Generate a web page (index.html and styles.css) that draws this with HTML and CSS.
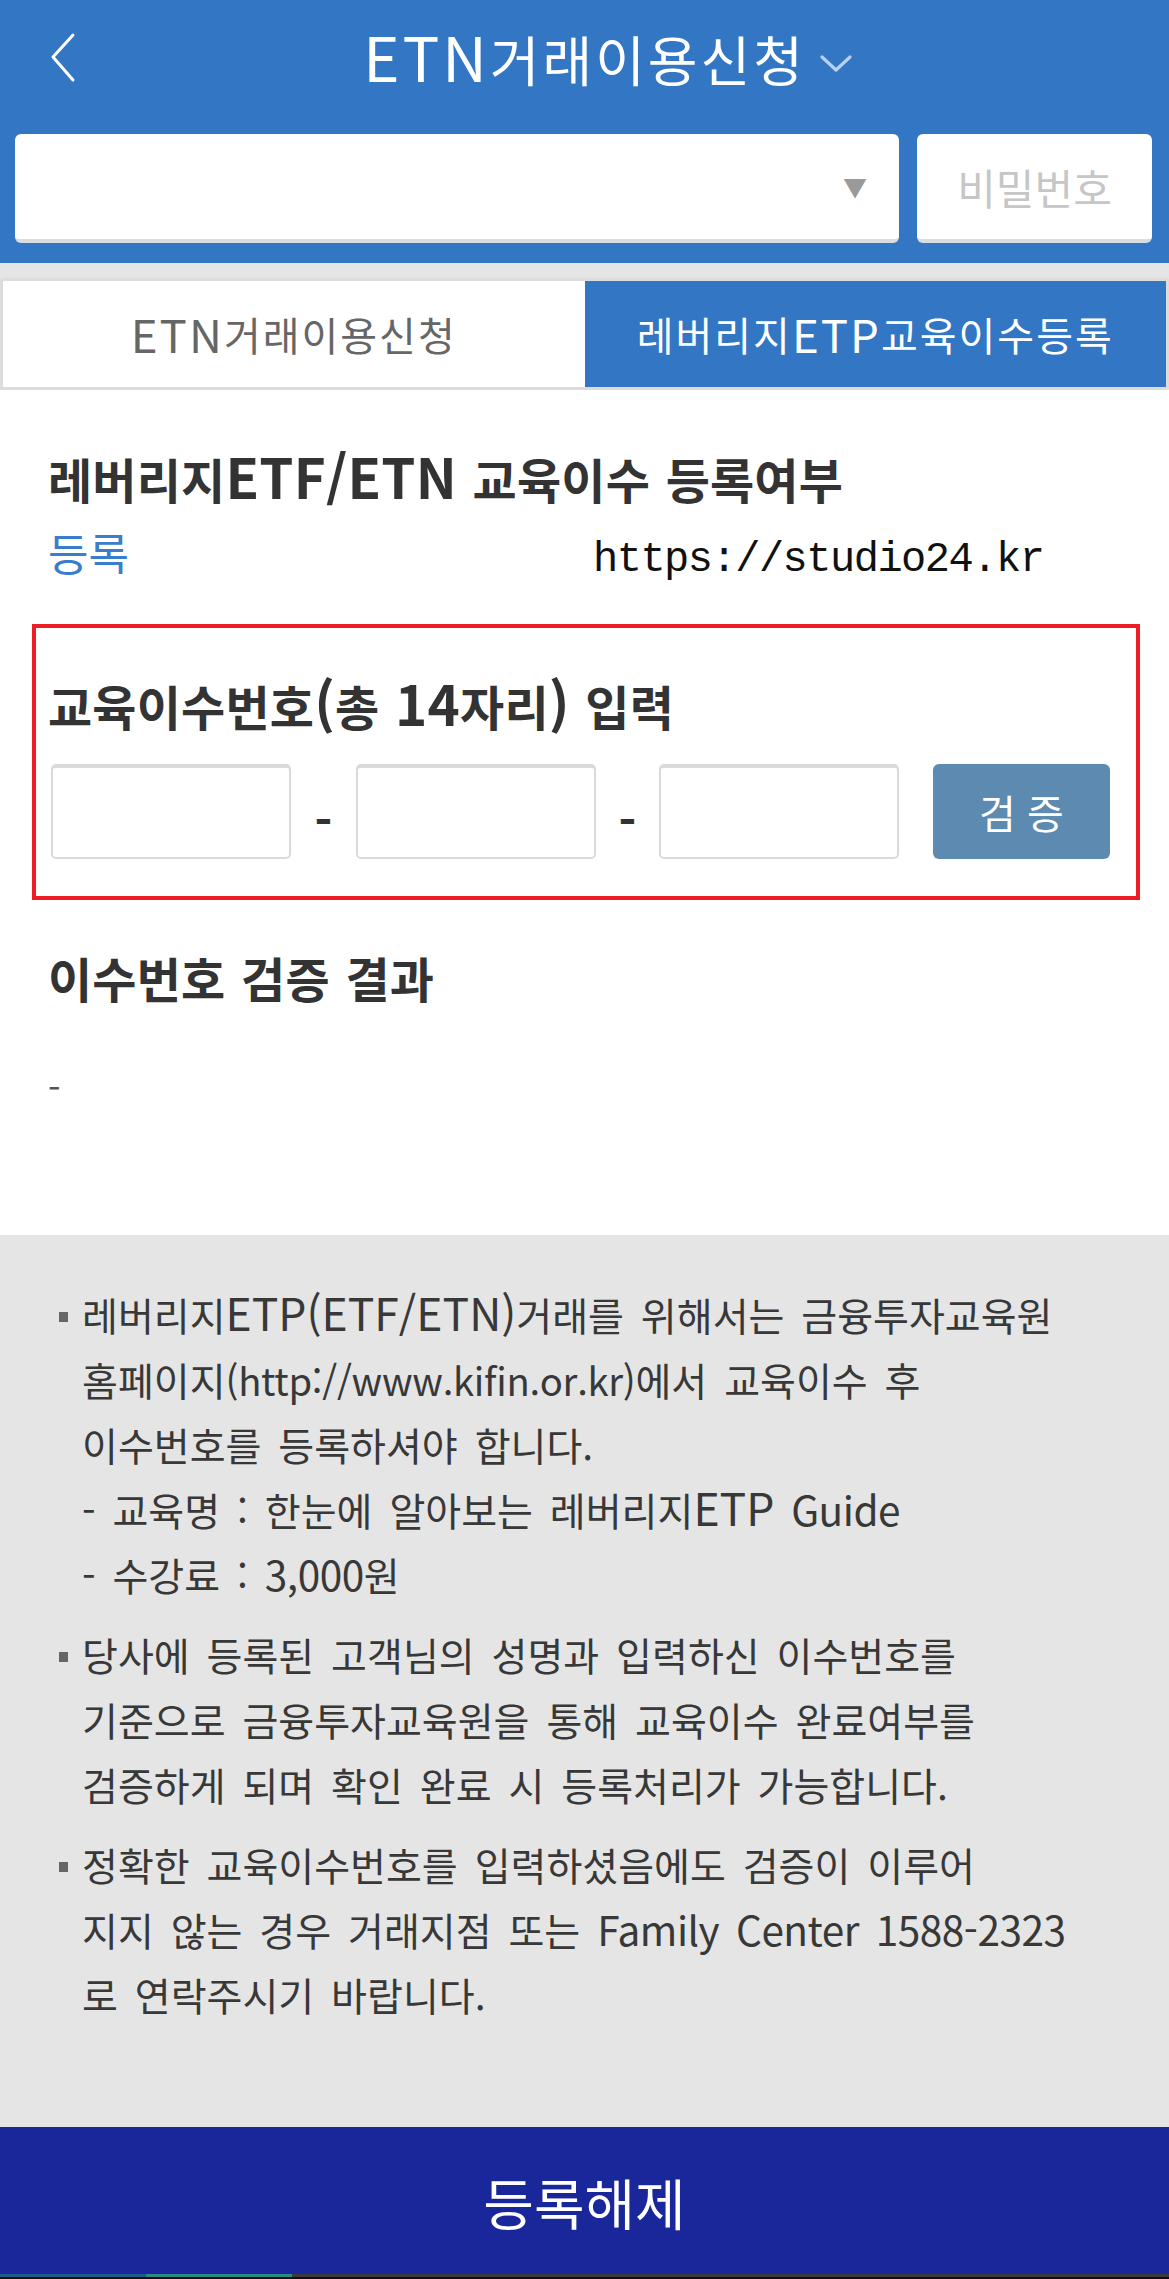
FILE: index.html
```html
<!DOCTYPE html>
<html lang="ko">
<head>
<meta charset="utf-8">
<title>ETN거래이용신청</title>
<link rel="stylesheet" href="styles.css">
</head>
<body>
<header class="header">
  <div class="topbar">
    <span class="back">
      <svg width="30" height="52" viewBox="0 0 30 52"><polyline points="23,3 3,25 23,48" fill="none" stroke="#fff" stroke-width="3" stroke-linecap="round" stroke-linejoin="round"/></svg>
    </span>
    <h1 class="title"><span class="en">ETN</span>거래이용신청<span class="chev"><svg width="32" height="18" viewBox="0 0 32 18"><polyline points="2,2 16,15 30,2" fill="none" stroke="#b9d1ee" stroke-width="3.2" stroke-linecap="round" stroke-linejoin="round"/></svg></span></h1>
  </div>
  <div class="selrow">
    <div class="select"><span class="tri">&#9660;</span></div>
    <div class="pwd">비밀번호</div>
  </div>
</header>
<div class="tabwrap">
  <div class="tabs">
    <div class="tab"><span class="en">ETN</span>거래이용신청</div>
    <div class="tab active">레버리지<span class="en">ETP</span>교육이수등록</div>
  </div>
</div>
<main class="content">
  <h2 class="h">레버리지<span class="en">ETF/ETN</span> 교육이수 등록여부</h2>
  <div class="status"><span class="reg">등록</span><span class="url">https://studio24.kr</span></div>
  <section class="box">
    <h2 class="h">교육이수번호<span class="en">(</span>총 <span class="en">14</span>자리<span class="en">)</span> 입력</h2>
    <div class="inrow">
      <div class="inp"></div>
      <span class="dash">-</span>
      <div class="inp"></div>
      <span class="dash">-</span>
      <div class="inp"></div>
      <button class="verify">검 증</button>
    </div>
  </section>
  <h2 class="h h3">이수번호 검증 결과</h2>
  <div class="result">-</div>
</main>
<section class="notice">
  <ul>
    <li><span class="sq"></span><p>레버리지<span class="en">ETP(ETF/ETN)</span>거래를 위해서는 금융투자교육원<br>홈페이지<span class="lc">(http://www.kifin.or.kr)</span>에서 교육이수 후<br>이수번호를 등록하셔야 합니다.<br>- 교육명 : 한눈에 알아보는 레버리지<span class="en">ETP</span><span class="num"> Guide</span><br>- 수강료 : <span class="num">3,000</span>원</p></li>
    <li><span class="sq"></span><p>당사에 등록된 고객님의 성명과 입력하신 이수번호를<br>기준으로 금융투자교육원을 통해 교육이수 완료여부를<br>검증하게 되며 확인 완료 시 등록처리가 가능합니다.</p></li>
    <li><span class="sq"></span><p>정확한 교육이수번호를 입력하셨음에도 검증이 이루어<br>지지 않는 경우 거래지점 또는 <span class="num">Family Center 1588-2323</span><br>로 연락주시기 바랍니다.</p></li>
  </ul>
</section>
<footer class="bottom">
  <div class="unreg">등록해제</div>
  <div class="strip"><span class="s1"></span><span class="s2"></span><span class="s3"></span></div>
</footer>
</body>
</html>
```
FILE: styles.css
```css
* { box-sizing: border-box; }
html, body { margin: 0; padding: 0; }
body {
  width: 1169px;
  font-family: "Noto Sans CJK KR", "Noto Sans", sans-serif;
  background: #fff;
  color: #333;
}
.en { font-size: 1.14em; line-height: 1; }
.lc { font-size: 0.98em; line-height: 1; letter-spacing: -0.3px; }
.num { font-size: 1.04em; line-height: 1; letter-spacing: -0.5px; }
.header { background: #3377c4; padding-bottom: 20px; }
.topbar {
  height: 116px;
  display: grid;
  grid-template-columns: 1fr auto 1fr;
  align-items: center;
}
.back { padding-left: 50px; display: flex; align-items: center; }
.title {
  margin: 0;
  font-size: 54px;
  font-weight: 400;
  color: #fff;
  line-height: 64px;
  position: relative;
  letter-spacing: 3px;
}
.chev { position: absolute; left: calc(100% + 14px); top: 50%; margin-top: -8px; display: block; line-height: 0; }
.selrow { display: flex; gap: 18px; padding: 18px 17px 0 15px; height: 127px; }
.select {
  flex: 0 0 884px;
  height: 109px;
  background: #fff;
  border-radius: 6px;
  border-bottom: 4px solid #d9dde2;
  display: flex;
  justify-content: flex-end;
  align-items: center;
  padding-right: 32px;
}
.tri { color: #9a9a9a; font-size: 24px; line-height: 1; }
.pwd {
  flex: 1;
  height: 109px;
  background: #fff;
  border-radius: 6px;
  border-bottom: 4px solid #d9dde2;
  display: flex;
  align-items: center;
  justify-content: center;
  color: #c6c6c6;
  font-size: 42px;
}
.tabwrap { background: #e5e5e5; padding-top: 15px; }
.tabs {
  display: flex;
  border: 3px solid #dcdcdc;
  border-radius: 3px;
  height: 112px;
  background: #fff;
}
.tab {
  flex: 1;
  display: flex;
  align-items: center;
  justify-content: center;
  font-size: 40px;
  line-height: 50px;
  color: #666;
  letter-spacing: 2px;
}
.tab.active { background: #3377c4; color: #fff; }
.content { padding: 59px 28px 0 48px; height: 845px; }
.h {
  margin: 0;
  font-size: 48px;
  font-weight: 700;
  line-height: 54px;
  color: #333;
  letter-spacing: 0.2px;
  word-spacing: 2px;
}
.status { display: flex; align-items: baseline; margin-top: 22px; height: 50px; }
.reg { color: #3a7dcb; font-size: 44px; line-height: 50px; }
.url {
  font-family: "Liberation Mono", monospace;
  font-size: 42px;
  letter-spacing: -1.5px;
  color: #111;
  margin-left: 464px;
}
.box {
  margin: 47px 0 0 -16px;
  width: 1108px;
  height: 276px;
  border: 4px solid #ee1c25;
  padding: 48px 14px 0 12px;
}
.inrow { display: flex; align-items: center; margin-top: 32px; padding-left: 3px; }
.inp {
  width: 240px;
  height: 95px;
  border: 2px solid #dadada;
  border-top-width: 4px;
  border-radius: 5px;
  background: #fff;
}
.dash {
  width: 65px;
  text-align: center;
  font-size: 48px;
  font-weight: 700;
  line-height: 48px;
  color: #333;
  padding-top: 14px;
}
.dash:nth-of-type(2) { width: 63px; }
.verify {
  margin-left: 34px;
  width: 177px;
  height: 95px;
  border: 0;
  border-radius: 6px;
  background: #5c8ab0;
  color: #fff;
  font-family: inherit;
  font-size: 40px;
  padding: 0;
}
.h3 { margin-top: 50px; }
.result { margin-top: 62px; color: #555; font-size: 36px; line-height: 40px; }
.notice { background: #e5e5e5; padding: 47px 30px 97px 59px; height: 892px; }
.notice ul { list-style: none; margin: 0; padding: 0; }
.notice li { display: flex; align-items: flex-start; }
.notice li + li { margin-top: 15px; }
.sq { flex: 0 0 9px; width: 9px; height: 10px; background: #666; margin: 30px 14px 0 0; }
.notice p {
  margin: 0;
  font-size: 39px;
  line-height: 65px;
  color: #383838;
  word-spacing: 6px;
  white-space: nowrap;
}
.bottom { background: #19279a; }
.unreg {
  height: 147px;
  display: flex;
  align-items: center;
  justify-content: center;
  color: #fff;
  font-size: 55px;
}
.strip { display: flex; height: 5px; background: #111; }
.strip span { display: block; height: 3px; }
.s1 { width: 146px; background: #1f5a8a; }
.s2 { width: 146px; background: #2b8a86; }
.s3 { flex: 1; background: #3a3a3a; }
```
